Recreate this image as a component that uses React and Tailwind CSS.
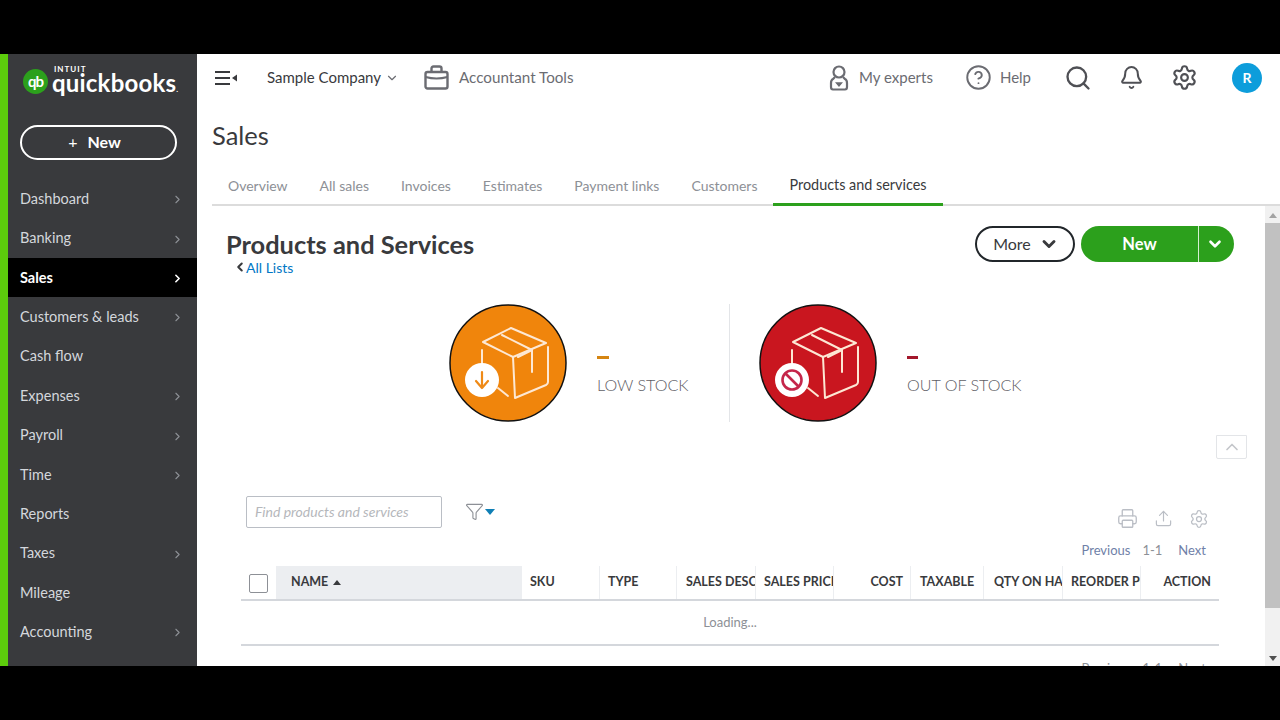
import { ChevronDown, ChevronLeft, ChevronRight, ChevronUp, Search, Bell, Settings, Printer, Upload, CircleHelp, Funnel } from "lucide-react";

const navItems = [
  { name: "Dashboard", arrow: true },
  { name: "Banking", arrow: true },
  { name: "Sales", arrow: true, active: true },
  { name: "Customers & leads", arrow: true },
  { name: "Cash flow" },
  { name: "Expenses", arrow: true },
  { name: "Payroll", arrow: true },
  { name: "Time", arrow: true },
  { name: "Reports" },
  { name: "Taxes", arrow: true },
  { name: "Mileage" },
  { name: "Accounting", arrow: true },
];

const tabs = ["Overview", "All sales", "Invoices", "Estimates", "Payment links", "Customers", "Products and services"];

const columns = [
  { name: "SKU", w: "w-[78px] pl-2" },
  { name: "TYPE", w: "w-[77px] pl-2" },
  { name: "SALES DESCRIPTION", w: "w-[79px] pl-[9px]" },
  { name: "SALES PRICE", w: "w-[78px] pl-2" },
  { name: "COST", w: "w-[77px] justify-end pr-[7px]" },
  { name: "TAXABLE", w: "w-[73px] pl-[9px]" },
  { name: "QTY ON HAND", w: "w-[79px] pl-[10px]" },
  { name: "REORDER POINT", w: "w-[78px] pl-2" },
  { name: "ACTION", w: "w-[78px] justify-end pr-2" },
];

function BoxIcon({ color, children }) {
  return (
    <svg width="118" height="118" viewBox="0 0 118 118" className="shrink-0">
      <circle cx="59" cy="59" r="58" fill={color} stroke="#111" strokeWidth="1.5" />
      <g fill="none" stroke="#fde8d4" strokeWidth="2" strokeLinecap="round" strokeLinejoin="round">
        <path d="M62 24 L97 39 L64 53 L34 38 Z" />
        <path d="M64 53 L66 94 L97 81 Q99 80 99 78 L99 43" />
        <path d="M53 31 L83 46 L69 53" />
        <path d="M83 46 L83 68" />
        <path d="M33 46 L33 62" />
        <path d="M49 84 L59 92" />
      </g>
      <circle cx="33" cy="76" r="17" fill="#fff" />
      {children}
    </svg>
  );
}

function ExpertIcon() {
  return (
    <svg width="20" height="26" viewBox="0 0 20 26" fill="none" stroke="#6b6c72" strokeWidth="2.2" className="shrink-0">
      <circle cx="10" cy="7" r="5.5" />
      <path d="M6 12 L4 14 Q2 15 2 18 V22 Q2 24.5 4 24.5 H16 Q18 24.5 18 22 V18 Q18 15 16 14 L14 12" />
      <path d="M7.5 18 H12.5 L10 21 Z" fill="#6b6c72" strokeWidth="1.4" />
    </svg>
  );
}

function BriefcaseIcon() {
  return (
    <svg width="25" height="25" viewBox="0 0 25 25" fill="none" stroke="#6b6c72" strokeWidth="2.4" className="ml-[25px] shrink-0">
      <rect x="1.5" y="7" width="22" height="16.5" rx="2" />
      <path d="M7.5 7 V3.5 Q7.5 1.5 9.5 1.5 H15.5 Q17.5 1.5 17.5 3.5 V7" />
      <path d="M1.5 12 Q12.5 15 23.5 12" strokeWidth="2" />
    </svg>
  );
}

function Logo() {
  return (
    <div className="flex items-center">
      <div className="flex h-[25px] w-[25px] items-center justify-center rounded-full bg-[#2ca01c] text-[15px] font-bold tracking-[-1px] text-white">qb</div>
      <div className="ml-[4px] flex flex-col">
        <span className="ml-[2px] h-[8px] text-[8px] font-bold leading-[8px] tracking-[1px] text-white">INTUIT</span>
        <span className="text-[24px] font-bold leading-[20px] tracking-[0.2px] text-white">quickbooks<span className="text-[8px]">.</span></span>
      </div>
    </div>
  );
}

export default function App() {
  return (
    <div className="flex h-[720px] w-[1280px] flex-col overflow-hidden bg-black font-['Lato','Noto_Sans',sans-serif]">
      <div className="h-[54px] shrink-0" />
      <div className="flex h-[612px] shrink-0 bg-white">
        <div className="w-2 shrink-0 bg-[#5ccc0c]" />
        <aside className="flex w-[189px] shrink-0 flex-col bg-[#393a3d]">
          <div className="flex h-[58px] items-center pb-[3px] pl-[15px]">
            <Logo />
          </div>
          <div className="px-3 pt-[13px]">
            <button className="flex h-[35px] w-[157px] items-center justify-center gap-[10px] rounded-full border-2 border-white pb-[2px] pr-[8px] text-[16px] font-bold text-white">
              <span className="font-normal">+</span>
              New
            </button>
          </div>
          <nav className="mt-[19px]">
            {navItems.map((item) => (
              <div key={item.name} className={`flex h-[39.4px] items-center justify-between pl-3 pr-[13px] text-[14.5px] ${item.active ? "bg-black font-bold text-white" : "text-[#d4d7dc]"}`}>
                <span>{item.name}</span>
                {item.arrow && <ChevronRight size={13} strokeWidth={item.active ? 3 : 2} className={item.active ? "mt-[2px] text-white" : "mt-[2px] text-[#8d9096]"} />}
              </div>
            ))}
          </nav>
        </aside>

        <div className="flex min-w-0 flex-1 flex-col">
          <header className="flex h-[48px] shrink-0 items-center pb-[1px] pl-[18px] pr-[18px] text-[15px] text-[#6b6c72]">
            <svg width="23" height="16" viewBox="0 0 23 16" className="shrink-0" stroke="#393a3d" strokeWidth="2">
              <path d="M0 2 H15 M0 8 H15 M0 14 H15" />
              <path d="M17 8 L22 4.5 V11.5 Z" fill="#393a3d" stroke="none" />
            </svg>
            <span className="ml-[29px] text-[#393a3d]">Sample Company</span>
            <ChevronDown size={14} className="ml-[4px]" />
            <BriefcaseIcon />
            <span className="ml-[10px] text-[15.2px]">Accountant Tools</span>
            <div className="ml-auto flex items-center">
              <ExpertIcon />
              <span className="ml-[10px]">My experts</span>
              <CircleHelp size={27} strokeWidth={1.7} className="ml-[32px]" />
              <span className="ml-[8px]">Help</span>
              <Search size={28} strokeWidth={2} className="ml-[33px] text-[#4f5055]" />
              <Bell size={25} strokeWidth={1.9} className="ml-[27px] text-[#4f5055]" />
              <Settings size={27} strokeWidth={1.9} className="ml-[27px] text-[#4f5055]" />
              <div className="ml-[34px] flex h-[30px] w-[30px] items-center justify-center rounded-full bg-[#0d9ddb] text-[14px] font-bold text-white">R</div>
            </div>
          </header>

          <div className="pl-[15px]">
            <h1 className="pt-[16px] text-[25.5px] leading-[34px] text-[#393a3d]">Sales</h1>
            <div className="mt-[18px] flex h-[36px] items-stretch border-b-2 border-[#dcdcdc]">
              {tabs.map((tab) => (
                <div key={tab} className={`-mb-[2px] flex items-center border-b-[3px] px-4 pb-[3px] ${tab === "Products and services" ? "border-[#2ca01c] text-[14.4px] text-[#393a3d]" : "border-transparent text-[14px] text-[#8d9096]"}`}>
                  {tab}
                </div>
              ))}
            </div>
          </div>

          <div className="flex min-h-0 flex-1 pl-[15px]">
            <main className="min-w-0 flex-1 overflow-hidden">
              <div className="flex pl-[14px] pr-[31px] pt-[20px]">
                <div>
                  <h2 className="text-[25.4px] font-bold leading-[36px] text-[#393a3d]">Products and Services</h2>
                  <div className="ml-[8px] flex h-[10px] items-center text-[14px] text-[#0077c5]">
                    <ChevronLeft size={14} strokeWidth={3.5} className="-ml-[1px] text-[#393a3d]" />
                    <span className="-ml-[1px]">All Lists</span>
                  </div>
                </div>
                <div className="ml-auto flex h-[36px] gap-[6px]">
                  <button className="flex w-[100px] items-center justify-center gap-2 rounded-full border-2 border-[#21262a] pl-[2px] text-[16px] text-[#393a3d]">
                    More
                    <ChevronDown size={20} strokeWidth={3.5} />
                  </button>
                  <div className="flex w-[153px] overflow-hidden rounded-full bg-[#2ca01c] text-white">
                    <button className="flex-1 text-[16.5px] font-bold">New</button>
                    <button className="flex w-[36px] items-center justify-center border-l border-[#d5f0d1] pr-1">
                      <ChevronDown size={18} strokeWidth={3.5} />
                    </button>
                  </div>
                </div>
              </div>

              <div className="mt-[32px] flex h-[118px] pl-[237px]">
                <BoxIcon color="#f0850c">
                  <path d="M33 68 V83 M27 77 L33 84 L39 77" fill="none" stroke="#ef8a17" strokeWidth="2.2" strokeLinecap="round" strokeLinejoin="round" />
                </BoxIcon>
                <div className="ml-[30px] w-[132px] pt-[52px]">
                  <div className="h-[3px] w-[12px] bg-[#d58512]" />
                  <div className="mt-[16px] text-[16.1px] font-light leading-5 text-[#5f6066]">LOW STOCK</div>
                </div>
                <div className="w-px bg-[#e3e5e8]" />
                <div className="ml-[29px]">
                  <BoxIcon color="#c9161f">
                    <circle cx="33" cy="76" r="9.5" fill="none" stroke="#c5264a" strokeWidth="2.6" />
                    <path d="M26.5 69.5 L39.5 82.5" stroke="#c5264a" strokeWidth="2.6" />
                  </BoxIcon>
                </div>
                <div className="ml-[30px] pt-[52px]">
                  <div className="h-[3px] w-[11px] bg-[#a3172b]" />
                  <div className="mt-[16px] text-[16.1px] font-light leading-5 text-[#5f6066]">OUT OF STOCK</div>
                </div>
              </div>

              <div className="flex justify-end pr-[18px] pt-[13px]">
                <div className="flex h-[24px] w-[31px] items-center justify-center rounded-b-[2px] border border-[#e3e5e8] text-[#c4c6ca]">
                  <ChevronUp size={20} />
                </div>
              </div>

              <div className="mt-[37px] flex h-[31px] items-center pl-[34px]">
                <div className="flex h-[32px] w-[196px] items-center rounded-[2px] border border-[#babec5] pl-[8px] text-[14px] italic text-[#b5b7bb]">Find products and services</div>
                <Funnel size={19} strokeWidth={1.4} className="ml-[23px] text-[#8d9096]" />
                <div className="ml-[1px] h-0 w-0 border-x-[5px] border-t-[6px] border-x-transparent border-t-[#0f7fb5]" />
                <div className="ml-auto mt-[14px] flex items-center gap-[16px] pr-[56px] text-[#babec5]">
                  <Printer size={21} strokeWidth={1.5} />
                  <Upload size={19} strokeWidth={1.5} />
                  <Settings size={20} strokeWidth={1.5} />
                </div>
              </div>

              <div className="ml-[29px] mr-[46px] mt-[15px]">
                <div className="flex justify-end gap-[12px] pr-[13px] text-[13px] leading-4 text-[#8d9096]">
                  <span className="text-[#6f7fa8]">Previous</span>
                  <span>1-1</span>
                  <span className="ml-[4px] text-[#6f7fa8]">Next</span>
                </div>
                <div className="mt-[8px] flex h-[35px] border-b-2 border-[#d4d7dc] text-[12.5px] font-bold text-[#393a3d]">
                  <div className="flex w-[35px] items-center pl-[8px]">
                    <div className="mt-[1px] h-[19px] w-[19px] rounded-[2px] border border-[#8d9096]" />
                  </div>
                  <div className="flex w-[246px] items-center gap-[5px] bg-[#eceef1] pl-[15px]">
                    NAME
                    <div className="h-0 w-0 border-x-[4px] border-b-[5px] border-x-transparent border-b-[#393a3d]" />
                  </div>
                  {columns.map((col) => (
                    <div key={col.name} className={`flex items-center overflow-hidden whitespace-nowrap border-r border-[#eceef1] last:border-r-0 ${col.w}`}>
                      {col.name}
                    </div>
                  ))}
                </div>
                <div className="flex h-[45px] items-center justify-center border-b-2 border-[#d4d7dc] text-[13px] text-[#8d9096]">Loading...</div>
                <div className="flex justify-end gap-[12px] pr-[13px] pt-[14px] text-[13px] leading-4 text-[#8d9096]">
                  <span>Previous</span>
                  <span>1-1</span>
                  <span className="ml-[4px]">Next</span>
                </div>
              </div>
            </main>

            <div className="flex w-[15px] shrink-0 flex-col items-center bg-[#f1f1f1] pt-[3px]">
              <div className="h-[14px] pt-[4px]">
                <div className="h-0 w-0 border-x-[4px] border-b-[5px] border-x-transparent border-b-[#a3a3a3]" />
              </div>
              <div className="h-[385px] w-full bg-[#c1c1c1]" />
              <div className="mt-auto pb-[5px]">
                <div className="h-0 w-0 border-x-[4px] border-t-[5px] border-x-transparent border-t-[#505050]" />
              </div>
            </div>
          </div>
        </div>
      </div>
      <div className="flex-1" />
    </div>
  );
}
